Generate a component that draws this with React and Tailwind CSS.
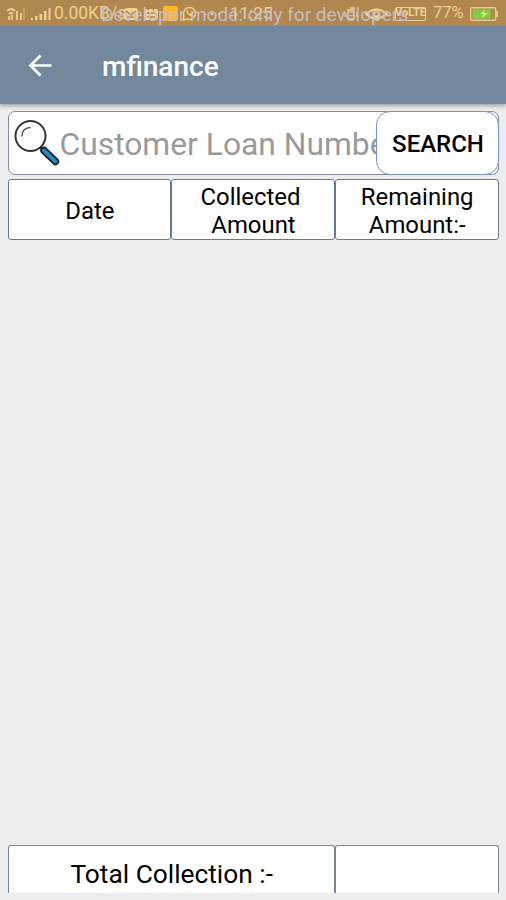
const columns = [['Date'], ['Collected', 'Amount'], ['Remaining', 'Amount:-']];

function SignalBars({ className }) {
  return (
    <svg className={className} viewBox="0 0 20 12" fill="currentColor">
      <path d="M0 10h2v2H0zM4 8h2.5v4H4zM8.500 6h2.500v6H8.500zM13 3h2.500v9H13zM17.500 0h2v12h-2z" />
    </svg>
  );
}

function StatusBar() {
  return (
    <div className="relative h-[26px] shrink-0 overflow-hidden bg-[#b0874f] text-[#ecd096]">
      <div className="flex h-full items-center whitespace-nowrap pl-[7px] pr-[7px] pt-px text-[17.500px]">
        <svg className="h-3 w-[18px]" viewBox="0 0 18 12" fill="none" stroke="currentColor" strokeWidth="1.800">
          <path d="M0 3Q4-1 8 3M2 6Q4 4 6 6M2 8v4M5 7v5M10 3v9M14 5v7" />
          <path d="M17 0v12" opacity=".4" />
        </svg>
        <SignalBars className="ml-[6px] h-3 w-5" />
        <span className="ml-[3px] w-[70px]">0.00KB/s</span>
        <svg className="h-[14px] w-[14px]" viewBox="0 0 14 14">
          <rect y="1" width="14" height="12" rx="3" fill="#f3d58c" />
          <path d="M2 4l5 4 5-4M3 10h8" fill="none" stroke="#a87c3f" strokeWidth="1.500" />
        </svg>
        <svg className="ml-[6px] h-[14px] w-[14px]" viewBox="0 0 14 14">
          <rect y="2" width="14" height="11" rx="2" fill="#f3d58c" />
          <path d="M2 0l3 3M12 0L9 3M3 6h8M3 10h8" fill="none" stroke="#a87c3f" strokeWidth="1.300" />
        </svg>
        <span className="ml-[5px] h-[15px] w-[15px] rounded-[2px] bg-[#ffb52d]" />
        <svg className="ml-[4px] h-[15px] w-[15px]" viewBox="0 0 15 15" fill="none" stroke="#f5cf78" strokeWidth="1.500">
          <path d="M1 14l1-4a6 6 0 1 1 3 3z" />
          <path d="M5 4c0 3 2 6 6 6l-2-2-2 1" />
        </svg>
        <svg className="ml-[6px] h-1 w-[19px]" viewBox="0 0 19 4" fill="currentColor">
          <circle cx="2" cy="2" r="1.300" />
          <circle cx="9" cy="2" r="1.300" />
          <circle cx="16" cy="2" r="1.300" />
        </svg>
        <span className="ml-[8px] text-[17px]">11:25</span>
        <span className="flex-1" />
        <svg className="h-[14px] w-[14px]" viewBox="0 0 14 14" fill="none" stroke="currentColor" strokeWidth="1.300">
          <path d="M4 3h6v9H4zM1 5v5M13 5v5M6 1h5" />
        </svg>
        <svg className="ml-[7px] h-[14px] w-[23px]" viewBox="0 0 23 14" fill="none" stroke="#f5d797" strokeWidth="1.800">
          <path d="M1 7Q11-2 22 7Q11 16 1 7z" />
          <circle cx="11.500" cy="7" r="2.500" />
        </svg>
        <span className="ml-[7px] flex h-[14px] w-[31px] items-center justify-center rounded-[2px] border border-[#ecd096] text-[11px] font-bold">VoLTE</span>
        <span className="ml-[7px] w-[31px] text-[16.500px]">77%</span>
        <svg className="ml-[6px] h-[14px] w-[29px]" viewBox="0 0 29 14">
          <rect x=".7" y=".7" width="25" height="12.600" rx="1.500" fill="none" stroke="#e8cc8c" strokeWidth="1.400" />
          <path d="M26 4h2v6h-2z" fill="#e8cc8c" />
          <path d="M2.500 2.500h18v9h-18z" fill="#82cc43" />
          <path d="M15 3l-5 4h3l-1 4 6-5h-4z" fill="#f0e383" />
        </svg>
      </div>
      <span className="absolute left-[101px] top-[3px] whitespace-nowrap text-[19px] leading-[24px] text-[#c5bbca]">Developer mode: only for developers</span>
    </div>
  );
}

function SearchGlass() {
  return (
    <svg className="h-[48px] w-[47px] shrink-0" viewBox="0 0 47 48" fill="none">
      <circle cx="16.500" cy="17" r="15" stroke="#333" strokeWidth="2" />
      <path d="M8 17C8 12 11 9 16 8.500" stroke="#555" strokeWidth="1.500" strokeLinecap="round" />
      <path d="M26.500 28l3 3" stroke="#222" strokeWidth="2.500" />
      <path d="M30 31.500L41.500 42.500" stroke="#14202a" strokeWidth="7.500" strokeLinecap="round" />
      <path d="M30 31.500L41.500 42.500" stroke="#2785bd" strokeWidth="4" strokeLinecap="round" />
    </svg>
  );
}

export default function App() {
  return (
    <div className="flex h-[900px] w-[506px] flex-col overflow-hidden bg-[#ededed] font-['Roboto',sans-serif] text-black">
      <StatusBar />
      <header className="z-10 flex h-[78px] shrink-0 items-center bg-[#73879d] pl-[28px] text-white shadow-[0_2px_4px_#9ca3ab]">
        <svg className="h-6 w-6" viewBox="0 0 24 24" fill="none" stroke="currentColor" strokeWidth="2.700">
          <path d="M23.500 12.500H2.500M12.500 2.500L2.500 12.500l10 10" />
        </svg>
        <h1 className="ml-[50px] pt-[4px] text-[28px] font-medium">mfinance</h1>
      </header>

      <main className="flex flex-1 flex-col px-[7.500px] pt-[7px]">
        <div className="flex h-[64px] shrink-0 rounded-[7px] border-[1.500px] border-[#858d9b] bg-white">
          <div className="flex min-w-0 flex-1 items-center overflow-hidden pl-[5px]">
            <SearchGlass />
            <span className="-ml-px whitespace-nowrap pt-[4px] text-[31.800px] text-[#9a9a9a]">Customer Loan Number</span>
          </div>
          <button className="-my-px -mr-px w-[123px] shrink-0 rounded-[14px] border-[1.500px] border-[#7497ce] bg-white pl-[2px] pt-[2px] text-[24px] font-medium">SEARCH</button>
        </div>

        <div className="mt-1 grid h-[60px] shrink-0 grid-cols-3 text-center text-[23.900px] leading-[28px]">
          {columns.map((lines) => (
            <div key={lines[0]} className="flex flex-col items-center justify-center whitespace-pre rounded-[3px] border-[1.500px] border-[#657b92] bg-white pl-px pt-[3px]">
              {lines.map((line) => <span key={line}>{line === 'Collected' ? `${line} ` : line}</span>)}
            </div>
          ))}
        </div>

        <div className="mb-[7px] mt-auto grid h-[48px] shrink-0 grid-cols-[2fr_1fr]">
          <div className="flex items-center justify-center rounded-t-[3px] border-[1.500px] border-b-0 border-[#788596] bg-white pl-px pt-[9px] text-[26.300px] leading-[28px]">Total Collection :-</div>
          <div className="rounded-t-[3px] border-[1.500px] border-b-0 border-[#788596] bg-white" />
        </div>
      </main>
    </div>
  );
}
